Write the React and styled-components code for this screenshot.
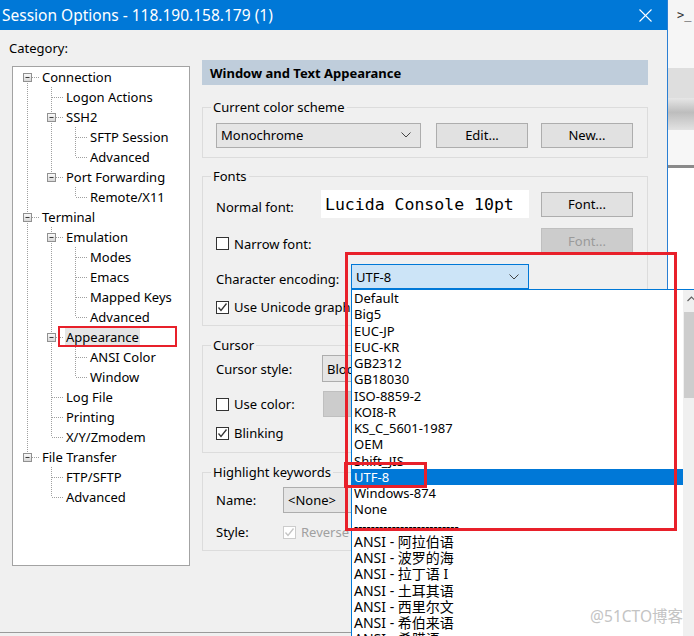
import styled, { createGlobalStyle } from "styled-components";

const Global = createGlobalStyle`
  html, body { margin: 0; padding: 0; background: #f0f0f0; }
  body { font-family: "Noto Sans", "Noto Sans CJK SC", sans-serif; font-size: 13px; color: #000; }
`;

const tree = [
  { label: "Connection", children: [
    { label: "Logon Actions" },
    { label: "SSH2", children: [{ label: "SFTP Session" }, { label: "Advanced" }] },
    { label: "Port Forwarding", children: [{ label: "Remote/X11" }] },
  ] },
  { label: "Terminal", children: [
    { label: "Emulation", children: [{ label: "Modes" }, { label: "Emacs" }, { label: "Mapped Keys" }, { label: "Advanced" }] },
    { label: "Appearance", selected: true, children: [{ label: "ANSI Color" }, { label: "Window" }] },
    { label: "Log File" },
    { label: "Printing" },
    { label: "X/Y/Zmodem" },
  ] },
  { label: "File Transfer", children: [{ label: "FTP/SFTP" }, { label: "Advanced" }] },
];

function flatten(nodes, guides = [], root = true) {
  let rows = [];
  nodes.forEach((n, i) => {
    const hasNext = i < nodes.length - 1;
    rows.push({
      label: n.label,
      selected: n.selected,
      guides,
      hasNext,
      firstRoot: root && i === 0,
      hasChildren: !!n.children,
    });
    if (n.children) rows = rows.concat(flatten(n.children, [...guides, hasNext], false));
  });
  return rows;
}

const encodings = [
  "Default", "Big5", "EUC-JP", "EUC-KR", "GB2312", "GB18030", "ISO-8859-2", "KOI8-R",
  "KS_C_5601-1987", "OEM", "Shift_JIS", "UTF-8", "Windows-874", "None",
  "-------------------------",
  "ANSI - 阿拉伯语", "ANSI - 波罗的海", "ANSI - 拉丁语 I", "ANSI - 土耳其语",
  "ANSI - 西里尔文", "ANSI - 希伯来语", "ANSI - 希腊语", "ANSI - 越南语",
];

const Page = styled.div`
  position: relative;
  width: 694px;
  height: 636px;
  overflow: hidden;
  display: flex;
  background: #f0f0f0;
`;

const Dialog = styled.div`
  width: 668px;
  height: 633px;
  flex-shrink: 0;
  display: flex;
  flex-direction: column;
  border-right: 1px solid #2a7fd4;
  border-bottom: 1px solid #9a9a9a;
  box-sizing: border-box;
  background: #f0f0f0;
`;

const TitleBar = styled.div`
  height: 30px;
  background: #0078d7;
  color: #fff;
  display: flex;
  align-items: center;
  justify-content: space-between;
  padding: 0 15px 0 2px;
  font-size: 15.5px;
  flex-shrink: 0;
`;

const DialogBody = styled.div`
  flex: 1;
  display: flex;
  padding-left: 9px;
`;

const LeftCol = styled.div`
  width: 180px;
  display: flex;
  flex-direction: column;
`;

const CategoryLabel = styled.div`
  margin-top: 11px;
  line-height: 15px;
`;

const TreePanel = styled.div`
  margin: 10px 0 0 3px;
  width: 178px;
  height: 500px;
  box-sizing: border-box;
  background: #fff;
  border: 1px solid #a3a3a3;
  padding-left: 2px;
`;

const TreeRow = styled.div`
  display: flex;
  align-items: center;
  height: 20px;
`;

const TreeText = styled.span`
  margin-left: 2px;
  padding: 0 1px;
  line-height: 18px;
  white-space: nowrap;
  background: ${(p) => (p.$selected ? "#e5e5e5" : "transparent")};
`;

const RightCol = styled.div`
  margin-left: 13px;
  width: 446px;
  padding-top: 30px;
  display: flex;
  flex-direction: column;
`;

const Header = styled.div`
  height: 25px;
  background: #bfcddb;
  font-weight: bold;
  padding-left: 8px;
  display: flex;
  align-items: center;
`;

const Group = styled.div`
  margin-top: ${(p) => p.$mt}px;
  border: 1px solid #dcdcdc;
  padding: 0 12px ${(p) => p.$pb}px 13px;
  display: flex;
  flex-direction: column;
`;

const Legend = styled.div`
  align-self: flex-start;
  margin: -9px 0 0 -5px;
  padding: 0 2px;
  height: 17px;
  line-height: 17px;
  background: #f0f0f0;
`;

const Row = styled.div`
  display: flex;
  align-items: center;
  margin-top: ${(p) => p.$mt}px;
  height: ${(p) => p.$h}px;
`;

const Label = styled.div`
  width: ${(p) => p.$w}px;
  padding-top: ${(p) => (p.$dy || 0) * 2}px;
  flex-shrink: 0;
  white-space: nowrap;
`;

const Button = styled.div`
  width: 92px;
  height: 25px;
  box-sizing: border-box;
  border: 1px solid ${(p) => (p.$disabled ? "#bfbfbf" : "#adadad")};
  background: ${(p) => (p.$disabled ? "#cccccc" : "#e1e1e1")};
  color: ${(p) => (p.$disabled ? "#9a9a9a" : "#000")};
  display: flex;
  align-items: center;
  justify-content: center;
  margin-left: ${(p) => p.$ml || 0}px;
  flex-shrink: 0;
`;

const Combo = styled.div`
  width: ${(p) => p.$w}px;
  height: ${(p) => p.$h || 25}px;
  box-sizing: border-box;
  border: 1px solid ${(p) => (p.$focused ? "#0078d7" : "#adadad")};
  background: ${(p) => (p.$focused ? "#cce4f7" : "#e5e5e5")};
  display: flex;
  align-items: center;
  justify-content: space-between;
  padding: 0 9px 0 4px;
  flex-shrink: 0;
  white-space: nowrap;
`;

const FontPreview = styled.div`
  width: 208px;
  height: 28px;
  background: #fff;
  display: flex;
  align-items: center;
  padding-left: 4px;
  box-sizing: border-box;
  font-family: "DejaVu Sans Mono", monospace;
  font-size: 16.5px;
  white-space: nowrap;
  flex-shrink: 0;
`;

const ColorSwatch = styled.div`
  width: 120px;
  height: 26px;
  background: #cccccc;
  border: 1px solid #bfbfbf;
  box-sizing: border-box;
`;

const CheckLabel = styled.div`
  display: flex;
  align-items: center;
  gap: 5px;
  white-space: nowrap;
  color: ${(p) => (p.$disabled ? "#a0a0a0" : "#000")};
`;

const Box = styled.div`
  width: 13px;
  height: 13px;
  box-sizing: border-box;
  border: 1px solid ${(p) => (p.$disabled ? "#cccccc" : "#333")};
  background: #fff;
  display: flex;
  align-items: center;
  justify-content: center;
  flex-shrink: 0;
`;

const BackWindow = styled.div`
  flex: 1;
  display: flex;
  flex-direction: column;
  background: #fff;
`;

const Band = styled.div`
  height: ${(p) => p.$h}px;
  background: ${(p) => p.$bg};
  flex-shrink: 0;
`;

const BackTitle = styled.div`
  height: 30px;
  background: #f5f5f5;
  display: flex;
  align-items: center;
  padding-left: 9px;
  font-family: "DejaVu Sans Mono", monospace;
  font-size: 12px;
  color: #333;
`;

const DropList = styled.div`
  position: absolute;
  left: 351px;
  top: 289px;
  width: 350px;
  height: 360px;
  box-sizing: border-box;
  background: #fff;
  border: 1px solid #0078d7;
  display: flex;
`;

const Items = styled.div`
  flex: 1;
  display: flex;
  flex-direction: column;
`;

const Item = styled.div`
  height: 16.25px;
  line-height: 16.25px;
  padding-left: 2px;
  white-space: nowrap;
  font-size: ${(p) => (p.$cjk ? "14px" : "13px")};
  background: ${(p) => (p.$active ? "#0078d7" : "transparent")};
  color: ${(p) => (p.$active ? "#fff" : "#000")};
`;

const ScrollBar = styled.div`
  width: 17px;
  background: #f0f0f0;
  display: flex;
  flex-direction: column;
  align-items: center;
`;

const ScrollArrow = styled.div`
  height: 17px;
  display: flex;
  align-items: center;
  justify-content: center;
`;

const Thumb = styled.div`
  margin-top: 5px;
  width: 15px;
  height: 86px;
  background: #cdcdcd;
`;

const Mark = styled.div`
  position: absolute;
  left: ${(p) => p.$x}px;
  top: ${(p) => p.$y}px;
  width: ${(p) => p.$w}px;
  height: ${(p) => p.$h}px;
  box-sizing: border-box;
  border: ${(p) => p.$t}px solid #e8202a;
  pointer-events: none;
`;

const Watermark = styled.div`
  position: absolute;
  right: 11px;
  bottom: 9px;
  font-size: 15.5px;
  color: #c4c4c4;
  font-family: "Noto Sans", "Noto Sans CJK SC", sans-serif;
`;

function Chevron() {
  return (
    <svg width="10" height="6" viewBox="0 0 10 6">
      <polyline points="0.5,0.5 5,5 9.5,0.5" fill="none" stroke="#444" strokeWidth="1" />
    </svg>
  );
}

function Checkbox({ checked, disabled, children }) {
  return (
    <CheckLabel $disabled={disabled}>
      <Box $disabled={disabled}>
        {checked && (
          <svg width="11" height="11" viewBox="0 0 11 11">
            <polyline points="1.5,5.5 4,8.5 9.5,1.5" fill="none" stroke={disabled ? "#c4c4c4" : "#333"} strokeWidth="1.3" />
          </svg>
        )}
      </Box>
      {children}
    </CheckLabel>
  );
}

const dots = { stroke: "#a0a0a0", strokeWidth: 1, strokeDasharray: "1 1" };

function Guide({ on }) {
  return (
    <svg width="24" height="20">
      {on && <line x1="12.5" y1="0" x2="12.5" y2="20" {...dots} />}
    </svg>
  );
}

function Connector({ row }) {
  return (
    <svg width="24" height="20">
      <defs>
        <linearGradient id="tb" x1="0" y1="0" x2="0" y2="1">
          <stop offset="0" stopColor="#fbfbfb" />
          <stop offset="1" stopColor="#d6d6d6" />
        </linearGradient>
      </defs>
      {!row.firstRoot && <line x1="12.5" y1="0" x2="12.5" y2="10" {...dots} />}
      {row.hasNext && <line x1="12.5" y1="10" x2="12.5" y2="20" {...dots} />}
      <line x1="13" y1="10.5" x2="24" y2="10.5" {...dots} />
      {row.hasChildren && (
        <>
          <rect x="8.5" y="6.5" width="8" height="8" fill="url(#tb)" stroke="#919191" />
          <line x1="10.5" y1="10.5" x2="14.5" y2="10.5" stroke="#3a3a3a" />
        </>
      )}
    </svg>
  );
}

export default function App() {
  const rows = flatten(tree);
  return (
    <Page>
      <Global />
      <Dialog>
        <TitleBar>
          <span>Session Options - 118.190.158.179 (1)</span>
          <svg width="13" height="13" viewBox="0 0 13 13">
            <line x1="0.5" y1="0.5" x2="12.5" y2="12.5" stroke="#fff" strokeWidth="1.1" />
            <line x1="12.5" y1="0.5" x2="0.5" y2="12.5" stroke="#fff" strokeWidth="1.1" />
          </svg>
        </TitleBar>
        <DialogBody>
          <LeftCol>
            <CategoryLabel>Category:</CategoryLabel>
            <TreePanel>
              {rows.map((r, i) => (
                <TreeRow key={i}>
                  {r.guides.map((g, j) => <Guide key={j} on={g} />)}
                  <Connector row={r} />
                  <TreeText $selected={r.selected}>{r.label}</TreeText>
                </TreeRow>
              ))}
            </TreePanel>
          </LeftCol>
          <RightCol>
            <Header>Window and Text Appearance</Header>

            <Group $mt={22} $pb={9}>
              <Legend>Current color scheme</Legend>
              <Row $mt={6} $h={26}>
                <Combo $w={205}>Monochrome<Chevron /></Combo>
                <Button $ml={15}>Edit...</Button>
                <Button $ml={13}>New...</Button>
              </Row>
            </Group>

            <Group $mt={18} $pb={10}>
              <Legend>Fonts</Legend>
              <Row $mt={5} $h={28}>
                <Label $w={105} $dy={3}>Normal font:</Label>
                <FontPreview>Lucida Console 10pt</FontPreview>
                <Button $ml={12}>Font...</Button>
              </Row>
              <Row $mt={10} $h={25}>
                <Label $w={325} $dy={3}>
                  <Checkbox>Narrow font:</Checkbox>
                </Label>
                <Button $disabled>Font...</Button>
              </Row>
              <Row $mt={11} $h={25}>
                <Label $w={135} $dy={2}>Character encoding:</Label>
                <Combo $w={178} $focused>UTF-8<Chevron /></Combo>
              </Row>
              <Row $mt={10} $h={16}>
                <Checkbox checked>Use Unicode graphics characters</Checkbox>
              </Row>
            </Group>

            <Group $mt={19} $pb={11}>
              <Legend>Cursor</Legend>
              <Row $mt={1} $h={27}>
                <Label $w={106}>Cursor style:</Label>
                <Combo $w={150} $h={27}>Block<Chevron /></Combo>
              </Row>
              <Row $mt={9} $h={26}>
                <Label $w={107}>
                  <Checkbox>Use color:</Checkbox>
                </Label>
                <ColorSwatch />
              </Row>
              <Row $mt={8} $h={16}>
                <Checkbox checked>Blinking</Checkbox>
              </Row>
            </Group>

            <Group $mt={19} $pb={10}>
              <Legend>Highlight keywords</Legend>
              <Row $mt={6} $h={26}>
                <Label $w={67}>Name:</Label>
                <Combo $w={150} $h={26}>&lt;None&gt;<Chevron /></Combo>
              </Row>
              <Row $mt={11} $h={16}>
                <Label $w={67}>Style:</Label>
                <Checkbox checked disabled>Reverse video</Checkbox>
              </Row>
            </Group>
          </RightCol>
        </DialogBody>
      </Dialog>

      <BackWindow>
        <BackTitle>&gt;_</BackTitle>
        <Band $h={38} $bg="#f6f6f6" />
        <Band $h={30} $bg="#dedede" />
        <Band $h={32} $bg="linear-gradient(#e6e6e6, #bdbdbd 45%, #e2e2e2)" />
        <Band $h={35} $bg="#f7f7f7" />
        <Band $h={3} $bg="#8a8a8a" />
        <Band $h={300} $bg="#ffffff" />
      </BackWindow>

      <DropList>
        <Items>
          {encodings.map((e, i) => (
            <Item key={i} $active={e === "UTF-8"} $cjk={e.startsWith("ANSI")}>{e}</Item>
          ))}
        </Items>
        <ScrollBar>
          <ScrollArrow>
            <svg width="9" height="6" viewBox="0 0 9 6">
              <polyline points="0.5,5 4.5,1 8.5,5" fill="none" stroke="#606060" strokeWidth="1.2" />
            </svg>
          </ScrollArrow>
          <Thumb />
        </ScrollBar>
      </DropList>

      <Mark $x={58} $y={326} $w={119} $h={21} $t={2} />
      <Mark $x={345} $y={252} $w={332} $h={279} $t={3} />
      <Mark $x={344} $y={462} $w={83} $h={26} $t={3} />
      <Watermark>@51CTO博客</Watermark>
    </Page>
  );
}
